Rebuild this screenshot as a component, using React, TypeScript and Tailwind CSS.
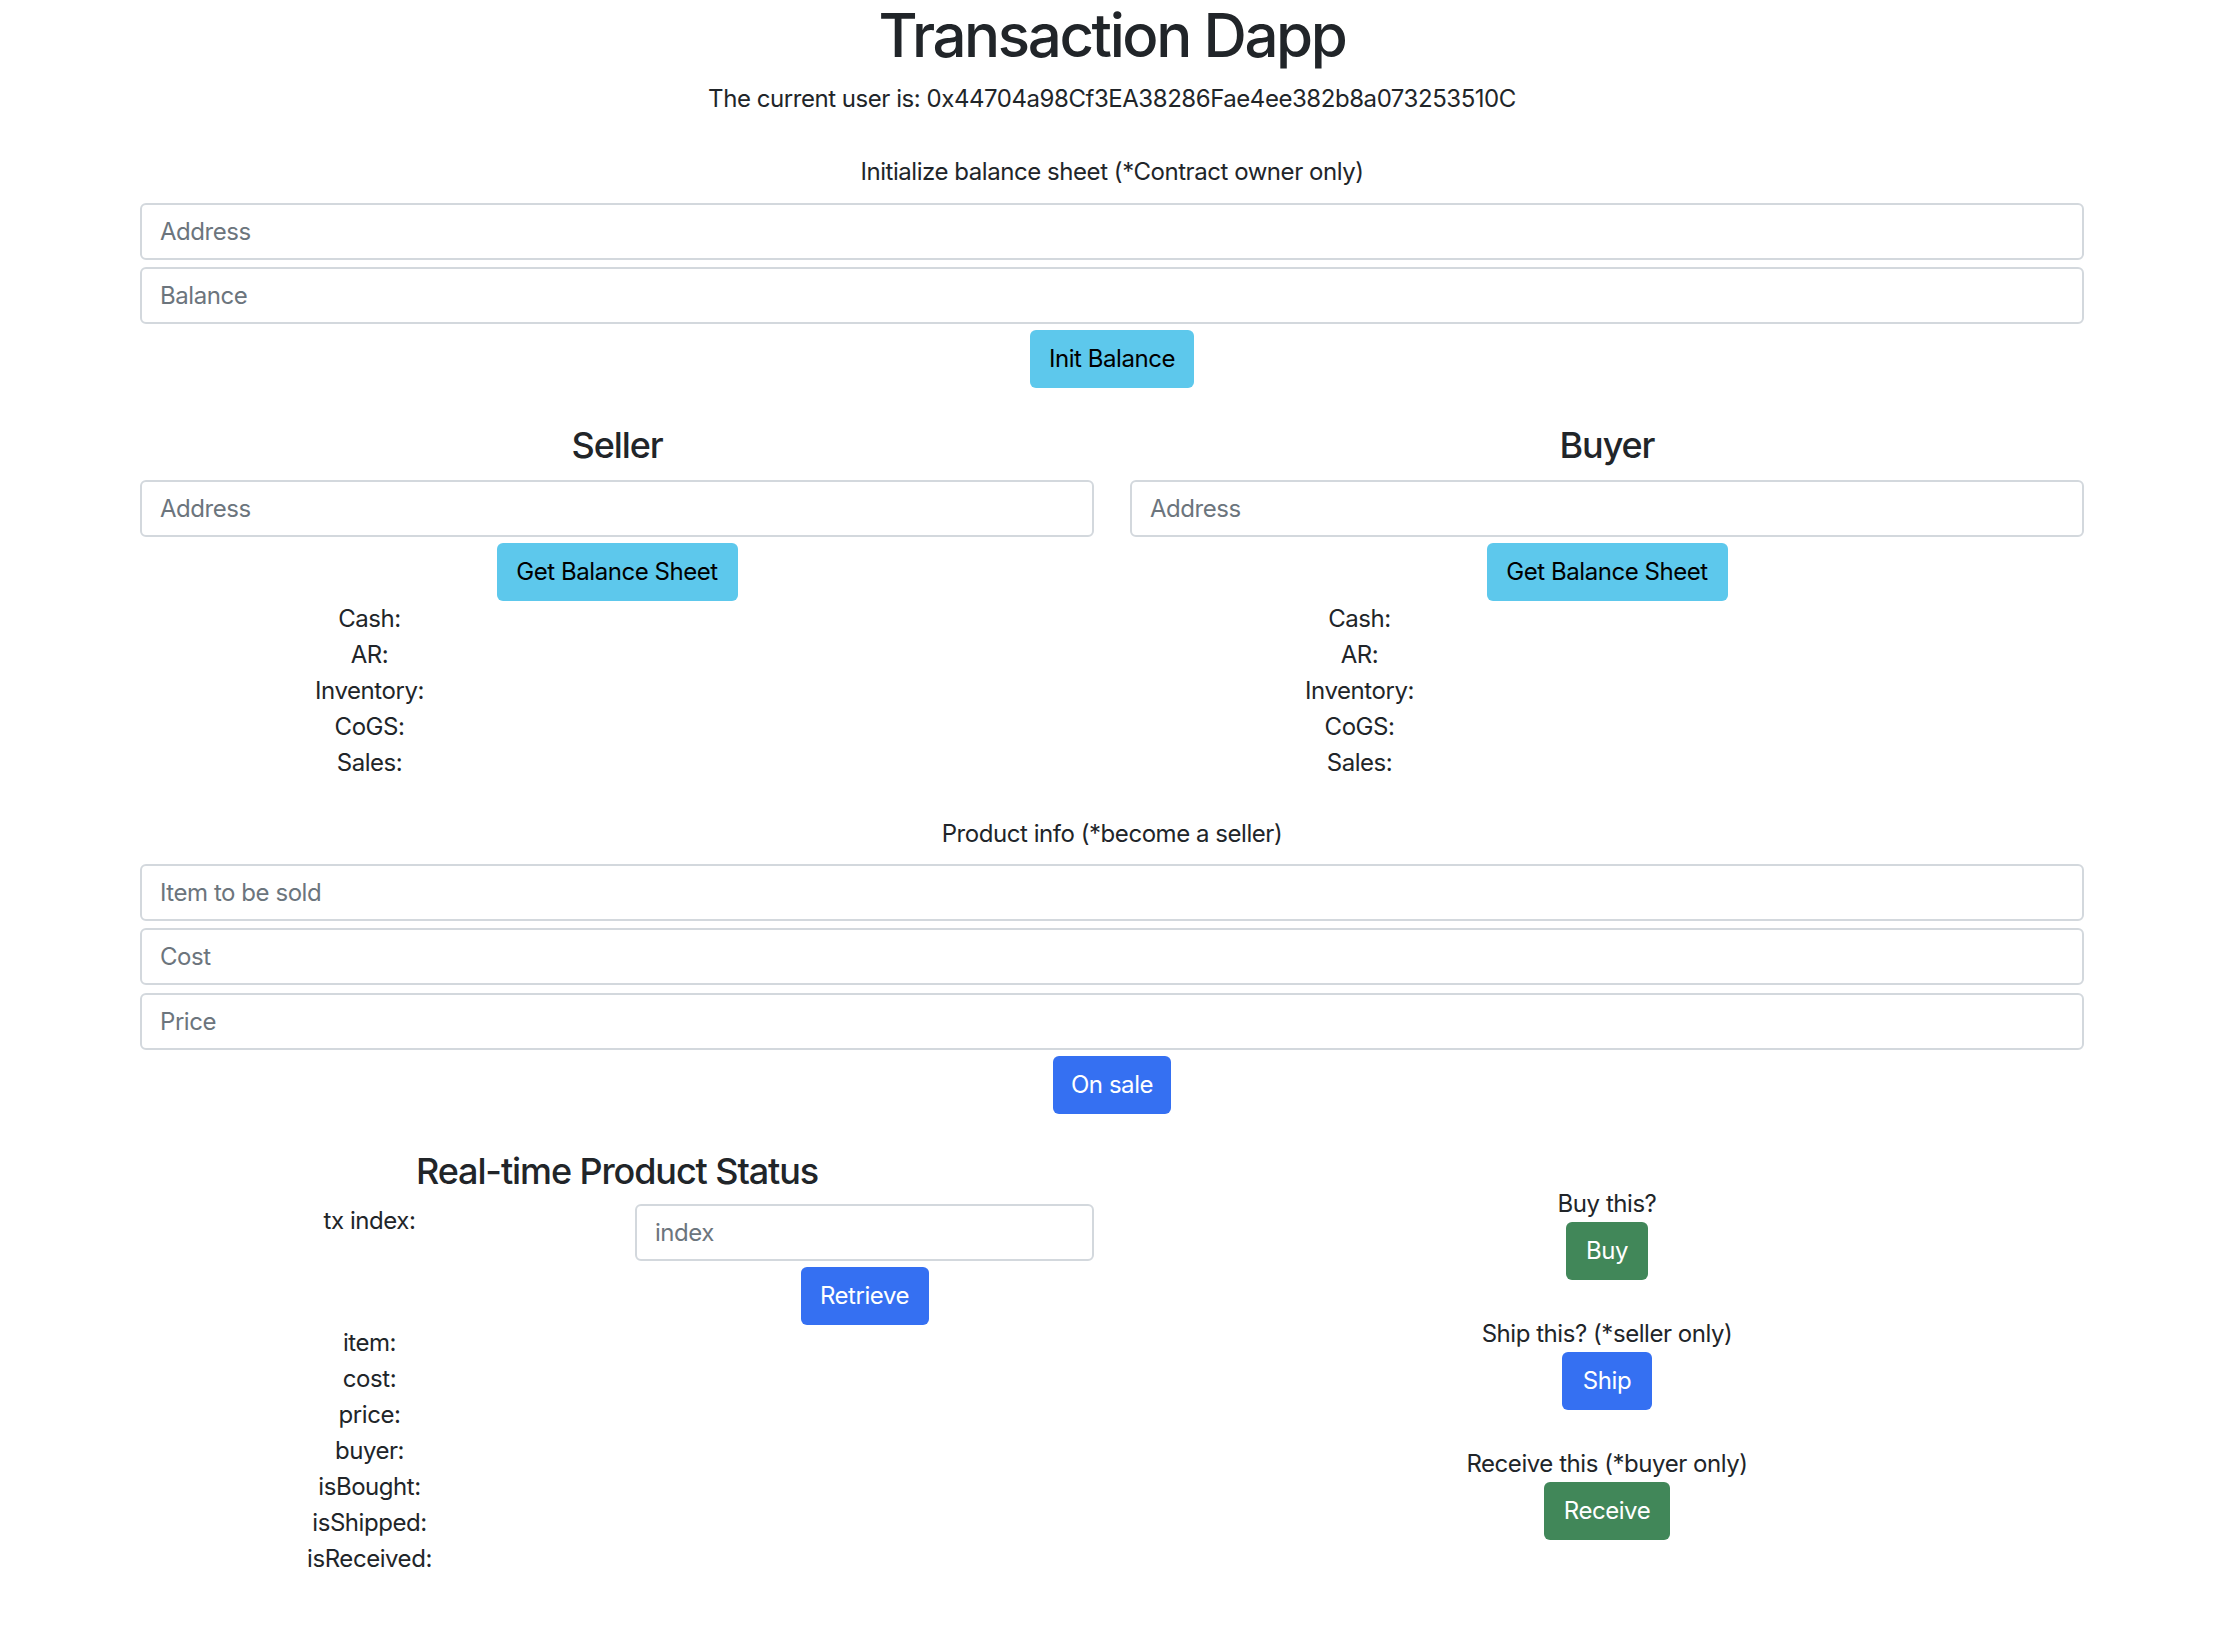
import React from "react";

function Field({ placeholder, className = "" }: { placeholder: string; className?: string }) {
  return (
    <input
      placeholder={placeholder}
      className={`block w-full h-[57px] border-2 border-[#d3d8dd] rounded-[6px] px-[18px] text-[24px] tracking-[-0.45px] text-[#212529] placeholder:text-[#6c757d] bg-white outline-none ${className}`}
    />
  );
}

function Btn({ children, className = "" }: { children: React.ReactNode; className?: string }) {
  return (
    <button
      className={`flex items-center justify-center h-[58px] rounded-[6px] text-[24px] leading-[36px] tracking-[-0.45px] ${className}`}
    >
      {children}
    </button>
  );
}

function Labels({ items, className = "" }: { items: string[]; className?: string }) {
  return (
    <div className={`grid grid-cols-2 gap-x-[36px] w-full ${className}`}>
      <div className="flex flex-col items-center">
        {items.map((t) => (
          <div key={t} className="h-[36px] leading-[36px]">
            {t}
          </div>
        ))}
      </div>
      <div />
    </div>
  );
}

function Party({ title }: { title: string }) {
  return (
    <div className="flex flex-col items-center">
      <h4 className="h-[43px] leading-[43px] text-[36px] font-medium tracking-[-1.1px]">{title}</h4>
      <Field placeholder="Address" className="mt-[13px]" />
      <Btn className="mt-[6px] w-[241px] bg-[#5dc8ec] text-black">Get Balance Sheet</Btn>
      <Labels items={["Cash:", "AR:", "Inventory:", "CoGS:", "Sales:"]} />
    </div>
  );
}

export default function App() {
  return (
    <div className="w-[2224px] min-h-[1636px] bg-white font-['Inter',sans-serif] text-[#212529] text-[24px] leading-[36px] tracking-[-0.45px]">
      <div className="mx-auto w-[1944px] flex flex-col items-center text-center">
        <h1 className="h-[81px] leading-[70px] text-[60px] font-medium tracking-[-2.4px]">Transaction Dapp</h1>
        <div className="h-[36px]">The current user is: 0x44704a98Cf3EA38286Fae4ee382b8a073253510C</div>
        <div className="mt-[37px] h-[36px]">Initialize balance sheet (*Contract owner only)</div>
        <Field placeholder="Address" className="mt-[13px]" />
        <Field placeholder="Balance" className="mt-[7px]" />
        <Btn className="mt-[6px] w-[164px] bg-[#5dc8ec] text-black">Init Balance</Btn>

        <div className="mt-[36px] grid grid-cols-2 gap-x-[36px] w-full">
          <Party title="Seller" />
          <Party title="Buyer" />
        </div>

        <div className="mt-[35px] h-[36px]">Product info (*become a seller)</div>
        <Field placeholder="Item to be sold" className="mt-[12px]" />
        <Field placeholder="Cost" className="mt-[7px]" />
        <Field placeholder="Price" className="mt-[8px]" />
        <Btn className="mt-[6px] w-[118px] bg-[#3570f2] text-white">On sale</Btn>

        <div className="mt-[36px] grid grid-cols-2 gap-x-[36px] w-full">
          <div className="flex flex-col items-center">
            <h4 className="h-[43px] leading-[43px] text-[36px] font-medium tracking-[-1.1px]">Real-time Product Status</h4>
            <div className="mt-[10px] grid grid-cols-2 gap-x-[36px] w-full">
              <div className="flex flex-col items-center">
                <div className="h-[36px] leading-[36px]">tx index:</div>
              </div>
              <div className="flex flex-col items-center">
                <Field placeholder="index" className="mt-[1px]" />
                <Btn className="mt-[6px] w-[128px] bg-[#3570f2] text-white">Retrieve</Btn>
              </div>
            </div>
            <Labels items={["item:", "cost:", "price:", "buyer:", "isBought:", "isShipped:", "isReceived:"]} />
          </div>
          <div className="flex flex-col items-center pt-[36px]">
            <div className="h-[36px]">Buy this?</div>
            <Btn className="w-[82px] bg-[#418759] text-white">Buy</Btn>
            <div className="mt-[36px] h-[36px]">Ship this? (*seller only)</div>
            <Btn className="w-[90px] bg-[#3570f2] text-white">Ship</Btn>
            <div className="mt-[36px] h-[36px]">Receive this (*buyer only)</div>
            <Btn className="w-[126px] bg-[#418759] text-white">Receive</Btn>
          </div>
        </div>
      </div>
    </div>
  );
}
